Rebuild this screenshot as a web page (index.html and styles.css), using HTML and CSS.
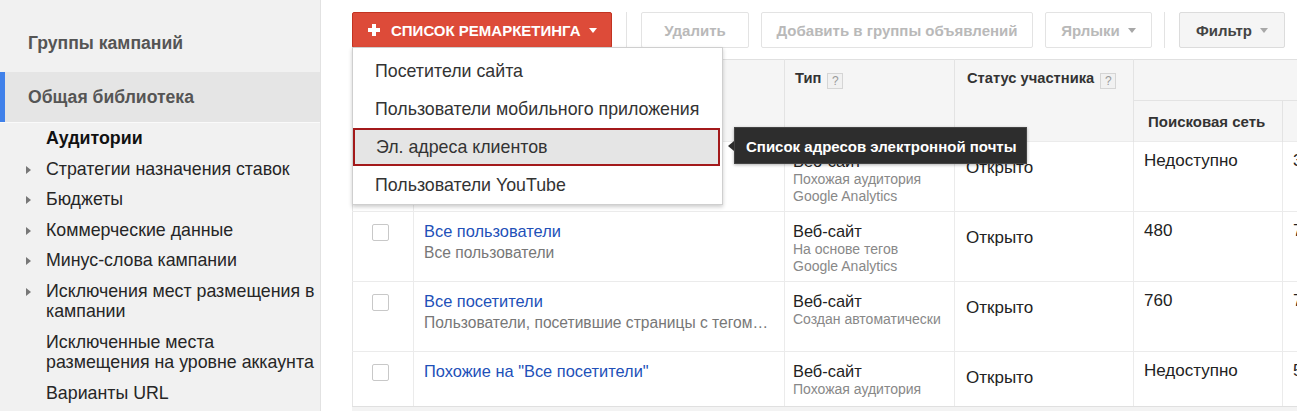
FILE: index.html
```html
<!DOCTYPE html>
<html lang="ru">
<head>
<meta charset="utf-8">
<title>Общая библиотека — Аудитории</title>
<link rel="stylesheet" href="styles.css">
</head>
<body>
<div class="app">
  <aside class="sidebar">
    <div class="nav-top">Группы кампаний</div>
    <div class="nav-top active">Общая библиотека</div>
    <ul class="subnav">
      <li class="current">Аудитории</li>
      <li class="exp">Стратегии назначения ставок</li>
      <li class="exp">Бюджеты</li>
      <li class="exp">Коммерческие данные</li>
      <li class="exp">Минус-слова кампании</li>
      <li class="exp">Исключения мест размещения в кампании</li>
      <li>Исключенные места размещения на уровне аккаунта</li>
      <li>Варианты URL</li>
    </ul>
  </aside>
  <main class="main">
    <div class="toolbar">
      <div class="add-wrap">
        <button class="btn btn-red"><span class="plus"></span>Список ремаркетинга<span class="caret white"></span></button>
        <div class="menu">
          <div class="menu-item">Посетители сайта</div>
          <div class="menu-item">Пользователи мобильного приложения</div>
          <div class="menu-item hl">Эл. адреса клиентов</div>
          <div class="menu-item">Пользователи YouTube</div>
        </div>
        <div class="tooltip">Список адресов электронной почты</div>
      </div>
      <span class="sep"></span>
      <button class="btn btn-dis w-del">Удалить</button>
      <button class="btn btn-dis w-add">Добавить в группы объявлений</button>
      <button class="btn btn-dis w-lbl">Ярлыки<span class="caret grey"></span></button>
      <span class="sep sep2"></span>
      <button class="btn btn-filter">Фильтр<span class="caret grey"></span></button>
    </div>
    <div class="table-wrap">
      <table class="grid">
        <colgroup>
          <col class="c-chk"><col class="c-name"><col class="c-type"><col class="c-status"><col class="c-search"><col class="c-next">
        </colgroup>
        <thead>
          <tr class="h1">
            <th rowspan="2"></th>
            <th rowspan="2"></th>
            <th rowspan="2">Тип <span class="help">?</span></th>
            <th rowspan="2">Статус участника <span class="help">?</span></th>
            <th colspan="2" class="group"></th>
          </tr>
          <tr class="h2">
            <th class="sub">Поисковая сеть</th>
            <th class="sub"></th>
          </tr>
        </thead>
        <tbody>
          <tr class="r70">
            <td><span class="chk"></span></td>
            <td></td>
            <td><div class="main-t">Веб-сайт</div><div class="sub-t">Похожая аудитория</div><div class="sub-t">Google Analytics</div></td>
            <td class="status">Открыто</td>
            <td>Недоступно</td>
            <td>3</td>
          </tr>
          <tr class="r70">
            <td><span class="chk"></span></td>
            <td><a class="lnk" href="#">Все пользователи</a><div class="desc">Все пользователи</div></td>
            <td><div class="main-t">Веб-сайт</div><div class="sub-t">На основе тегов</div><div class="sub-t">Google Analytics</div></td>
            <td class="status">Открыто</td>
            <td>480</td>
            <td>7</td>
          </tr>
          <tr class="r70">
            <td><span class="chk"></span></td>
            <td><a class="lnk" href="#">Все посетители</a><div class="desc">Пользователи, посетившие страницы с тегом…</div></td>
            <td><div class="main-t">Веб-сайт</div><div class="sub-t">Создан автоматически</div></td>
            <td class="status">Открыто</td>
            <td>760</td>
            <td>7</td>
          </tr>
          <tr class="r54">
            <td><span class="chk"></span></td>
            <td><a class="lnk" href="#">Похожие на "Все посетители"</a></td>
            <td><div class="main-t">Веб-сайт</div><div class="sub-t">Похожая аудитория</div></td>
            <td class="status">Открыто</td>
            <td>Недоступно</td>
            <td>5</td>
          </tr>
        </tbody>
      </table>
      <div class="table-foot"></div>
    </div>
  </main>
</div>
</body>
</html>
```

FILE: styles.css
```css
* { box-sizing: border-box; }
html, body { margin: 0; padding: 0; }
body {
  font-family: "Liberation Sans", Arial, sans-serif;
  background: #fff;
  color: #222;
  width: 1297px;
  height: 411px;
  overflow: hidden;
}
.app { display: flex; height: 411px; }

/* Sidebar */
.sidebar {
  width: 321px;
  flex: 0 0 321px;
  background: #f1f1f1;
  border-right: 1px solid #e2e2e2;
  padding-top: 18px;
}
.nav-top {
  height: 50px;
  line-height: 50px;
  padding-left: 28px;
  font-size: 17.6px;
  font-weight: bold;
  color: #555;
  margin-bottom: 4px;
}
.nav-top.active {
  background: #e5e5e5;
  border-left: 5px solid #4081ea;
  padding-left: 23px;
  margin-bottom: 0;
}
.subnav {
  list-style: none;
  margin: 0;
  padding: 0 3px 0 46px;
  border-top: 1px solid #fafafa;
}
.subnav li {
  position: relative;
  font-size: 17.8px;
  line-height: 20.5px;
  padding: 5px 0 5px;
  color: #262626;
}
.subnav li.current { font-weight: bold; color: #111; }
.subnav li.exp::before {
  content: "";
  position: absolute;
  left: -20px;
  top: 12px;
  border-left: 5px solid #777;
  border-top: 4px solid transparent;
  border-bottom: 4px solid transparent;
}

/* Main */
.main {
  flex: 1;
  padding-left: 31px;
  overflow: hidden;
  min-width: 0;
}
.toolbar {
  display: flex;
  align-items: center;
  height: 59px;
  padding-top: 1px;
}
.add-wrap { position: relative; }
.btn {
  height: 36px;
  font-family: "Liberation Sans", Arial, sans-serif;
  font-size: 15px;
  font-weight: bold;
  border-radius: 2px;
  display: inline-flex;
  align-items: center;
  justify-content: center;
  cursor: default;
  white-space: nowrap;
}
.btn-red {
  width: 260px;
  background: #dd4b39;
  border: 1px solid #c23321;
  color: #fff;
  text-transform: uppercase;
  padding: 0 12px 0 15px;
  justify-content: flex-start;
}
.plus {
  position: relative;
  width: 12px;
  height: 12px;
  margin-right: 11px;
  flex: 0 0 12px;
}
.plus::before, .plus::after {
  content: "";
  position: absolute;
  background: #fff;
}
.plus::before { left: 0; top: 4px; width: 12px; height: 4px; }
.plus::after { left: 4px; top: 0; width: 4px; height: 12px; }
.caret {
  display: inline-block;
  width: 0; height: 0;
  border-left: 4px solid transparent;
  border-right: 4px solid transparent;
  margin-left: 8px;
  margin-top: 1px;
}
.caret.white { border-top: 5px solid #fff; }
.caret.grey { border-top: 5px solid #a8a8a8; }
.sep {
  width: 1px;
  height: 36px;
  background: #e3e3e3;
  margin: 0 14px 0 14px;
}
.sep2 { margin: 0 14px 0 12px; }
.btn-dis {
  background: #fff;
  border: 1px solid #e3e3e3;
  color: #b9b9b9;
  margin-right: 12px;
}
.w-del { width: 108px; }
.w-add { width: 272px; }
.w-lbl { width: 107px; margin-right: 0; }
.btn-filter {
  width: 106px;
  background: #f5f5f5;
  border: 1px solid #dcdcdc;
  color: #444;
}

/* Dropdown menu */
.menu {
  position: absolute;
  left: 0;
  top: 35px;
  width: 371px;
  background: #fff;
  border: 1px solid #cfcfcf;
  box-shadow: 0 2px 4px rgba(0,0,0,0.2);
  padding: 4px 0 0;
  z-index: 5;
}
.menu-item {
  height: 38px;
  line-height: 38px;
  padding-left: 22px;
  font-size: 17.8px;
  color: #333;
  white-space: nowrap;
}
.menu-item.hl {
  background: #e5e5e5;
  border: 2px solid #a3191b;
  margin-right: 2px;
  padding-left: 21px;
  line-height: 34px;
}
.tooltip {
  position: absolute;
  left: 382px;
  top: 115px;
  width: 293px;
  height: 37px;
  line-height: 37px;
  padding-left: 11px;
  background: #2d2d2d;
  border: 1px solid #444;
  color: #fff;
  font-size: 15px;
  font-weight: bold;
  white-space: nowrap;
  z-index: 6;
  box-shadow: 0 1px 3px rgba(0,0,0,0.3);
}
.tooltip::before {
  content: "";
  position: absolute;
  left: -7px;
  top: 13px;
  border-right: 6px solid #2d2d2d;
  border-top: 5px solid transparent;
  border-bottom: 5px solid transparent;
}

/* Table */
.table-wrap { width: 1100px; }
.grid {
  border-collapse: collapse;
  table-layout: fixed;
  width: 1080px;
  border-top: 1px solid #e0e0e0;
  border-left: 1px solid #e5e5e5;
}
.c-chk { width: 61px; }
.c-name { width: 371px; }
.c-type { width: 170px; }
.c-status { width: 179px; }
.c-search { width: 149px; }
.c-next { width: 150px; }
.grid th {
  background: #f5f5f5;
  text-align: left;
  vertical-align: top;
  font-size: 14.7px;
  font-weight: bold;
  color: #333;
  padding: 10px 10px 0;
  border-right: 1px solid #e3e3e3;
}
.grid th:nth-child(4) { padding-left: 12px; }
.grid tr.h1 th { height: 41px; }
.grid th.group { border-bottom: 1px solid #e3e3e3; }
.grid th.sub {
  height: 41px;
  vertical-align: middle;
  padding: 0 14px;
  font-size: 15px;
}
.help {
  display: inline-block;
  width: 16px;
  height: 16px;
  line-height: 14px;
  border: 1px solid #d5d5d5;
  background: #f1f1f1;
  color: #999;
  font-size: 12px;
  font-weight: normal;
  text-align: center;
  vertical-align: -2px;
  margin-left: 2px;
}
.grid td {
  vertical-align: top;
  border-top: 1px solid #ebebeb;
  border-right: 1px solid #ebebeb;
  padding: 9px 10px 0;
  font-size: 17px;
  line-height: 20px;
  color: #222;
  white-space: nowrap;
  overflow: hidden;
}
.grid tr.r70 td { height: 70px; }
.grid tr.r54 td { height: 54px; }
.grid td:first-child { padding: 12px 0 0 19px; }
.grid td:nth-child(3) { padding-left: 8px; }
.grid td.status { padding-top: 16px; padding-left: 11px; }
.chk {
  display: block;
  width: 17px;
  height: 17px;
  border: 1px solid #c8c8c8;
  border-radius: 2px;
  background: #fff;
}
.lnk {
  color: #2150b8;
  text-decoration: none;
  font-size: 16.4px;
}
.desc {
  color: #777;
  font-size: 15.6px;
  line-height: 21px;
  overflow: hidden;
  text-overflow: ellipsis;
}
.main-t { font-size: 16.4px; line-height: 20px; }
.sub-t { font-size: 14px; line-height: 17px; color: #888; }
.table-foot {
  height: 6px;
  border-top: 1px solid #e0e0e0;
  background: #f3f3f3;
}
```
